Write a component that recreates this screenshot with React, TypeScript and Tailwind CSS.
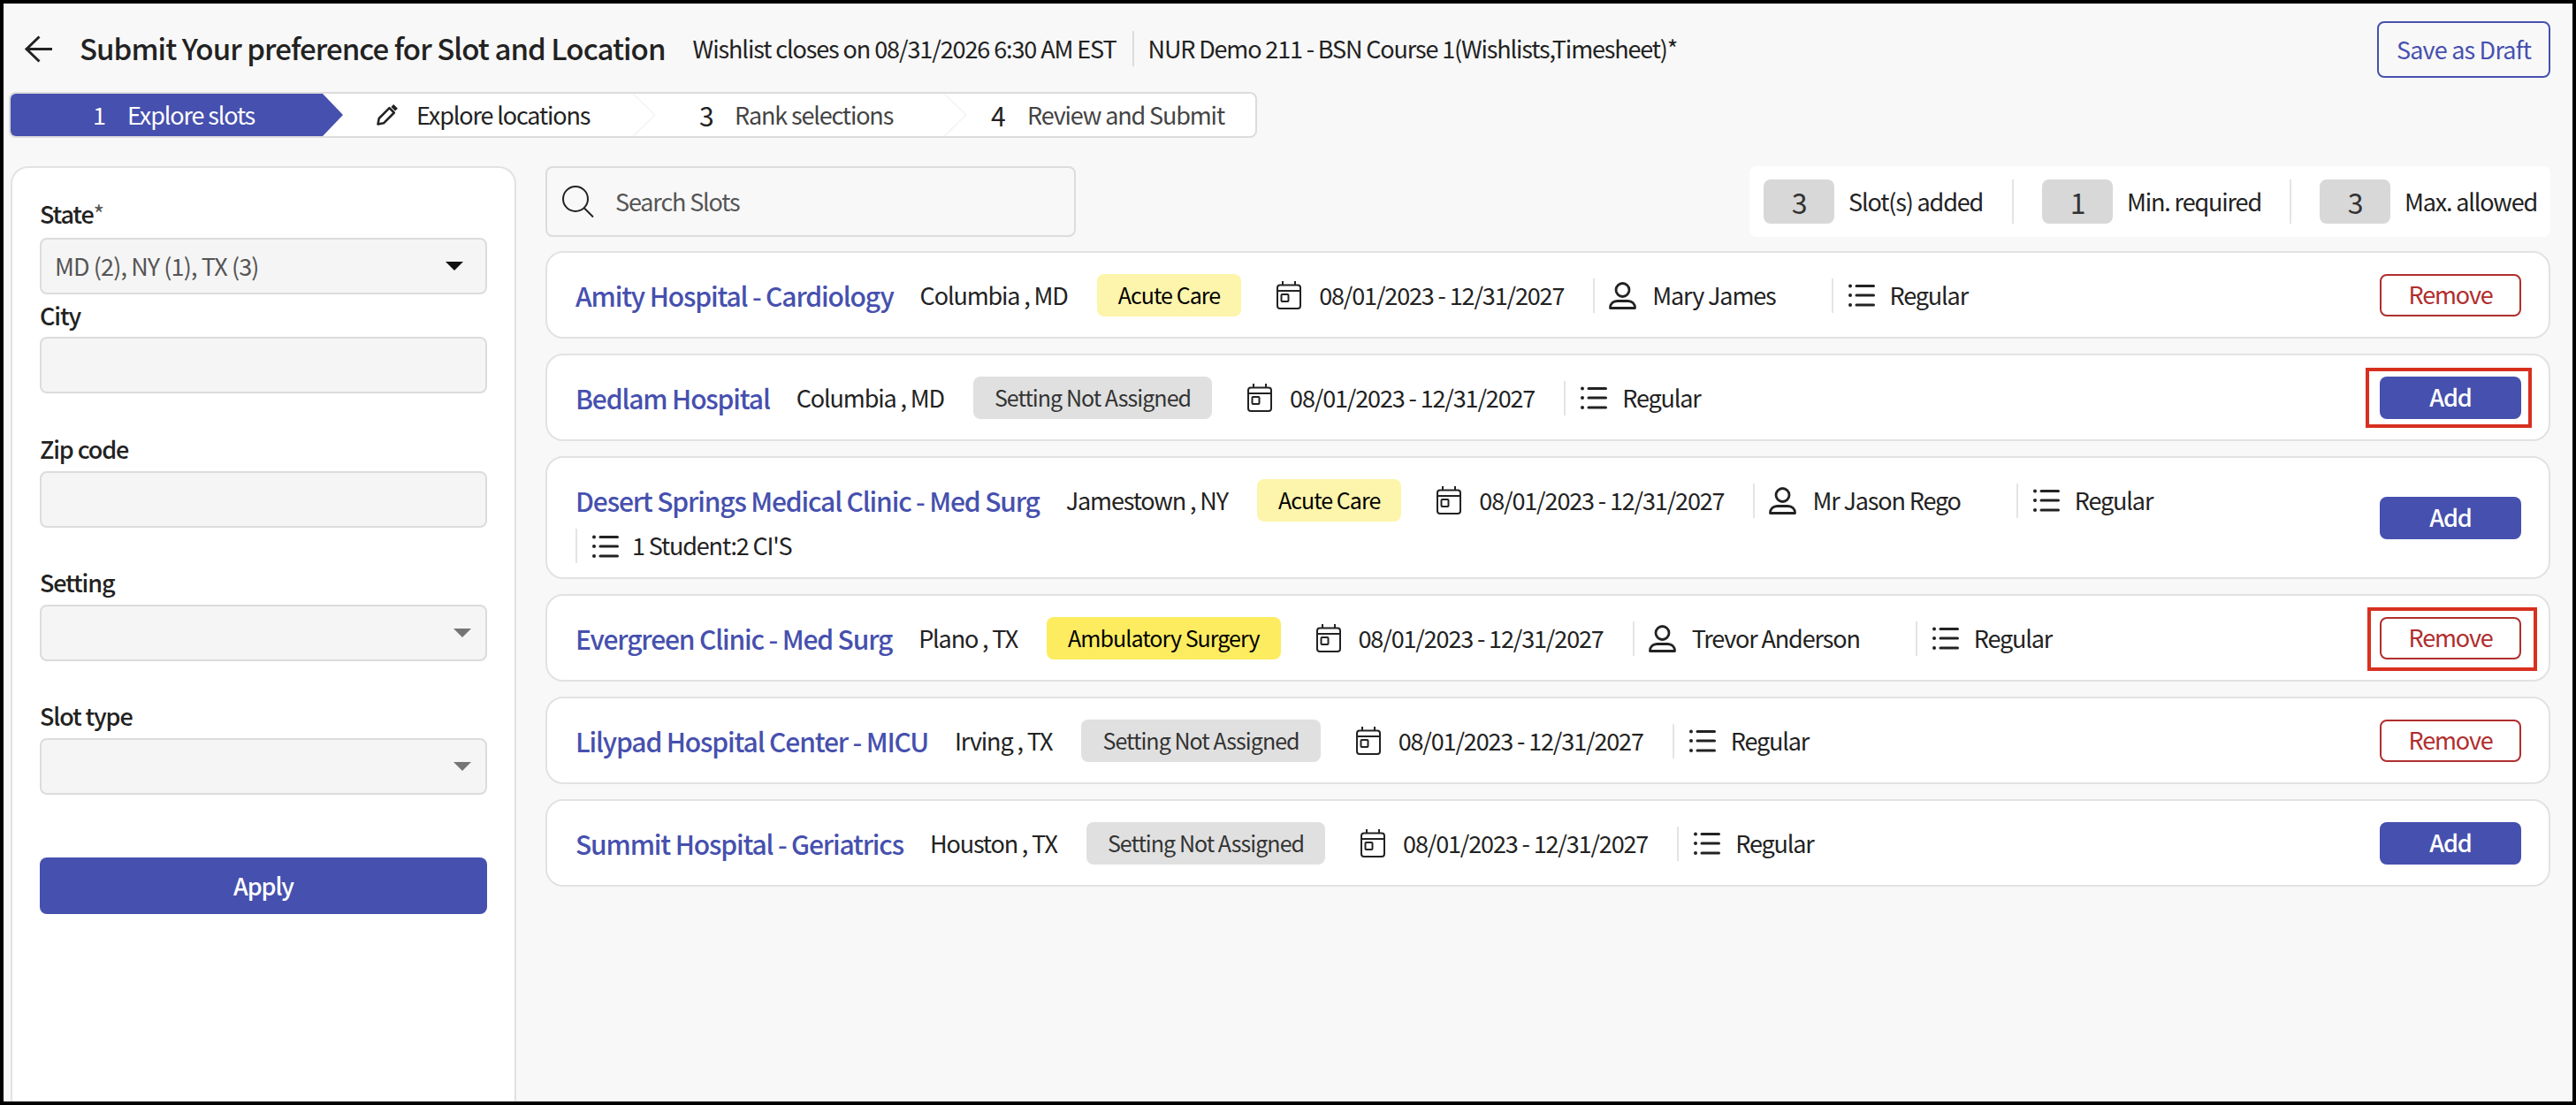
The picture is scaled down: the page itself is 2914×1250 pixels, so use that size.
import React from "react";

const IconCalendar = () => (
  <svg width="28" height="32" viewBox="0 0 28 32" fill="none" stroke="#222" strokeWidth="2" className="shrink-0">
    <rect x="1" y="4.500" width="26" height="26.500" rx="3" />
    <path d="M1 11h26M7 0v4.500M21 0v4.500" />
    <rect x="5.500" y="15" width="8" height="8" rx="1" />
  </svg>
);

const IconPerson = () => (
  <svg width="31" height="31" viewBox="0 0 31 31" fill="none" stroke="#222" strokeWidth="2.800" strokeLinejoin="round" className="shrink-0">
    <circle cx="15.500" cy="9" r="7.500" />
    <path d="M1.500 29.500c0-5 3.500-8 8-8h12c4.500 0 8 3 8 8z" />
  </svg>
);

const IconList = () => (
  <svg width="30" height="26" viewBox="0 0 30 26" fill="none" stroke="#222" strokeWidth="3" strokeLinecap="round" className="shrink-0">
    <path d="M9 2.500h19.500M9 13h19.500M9 24h19.500" />
    <circle cx="2" cy="2.500" r="2" fill="#222" stroke="none" />
    <circle cx="2" cy="13" r="2" fill="#222" stroke="none" />
    <circle cx="2" cy="24" r="2" fill="#222" stroke="none" />
  </svg>
);

const Chevron = () => (
  <svg width="26" height="48" viewBox="0 0 26 48" fill="none" stroke="#f3f3f3" strokeWidth="1.500" className="absolute -left-px top-0">
    <path d="M0 0l25 24L0 48" />
  </svg>
);

type Slot = {
  name: string;
  location: string;
  setting: string;
  tone: string;
  teacher?: string;
  extra?: string;
  action: "Add" | "Remove";
  mark?: string;
};

const slots: Slot[] = [
  { name: "Amity Hospital - Cardiology", location: "Columbia , MD", setting: "Acute Care", tone: "bg-[#fdf5ab] text-black", teacher: "Mary James", action: "Remove" },
  { name: "Bedlam Hospital", location: "Columbia , MD", setting: "Setting Not Assigned", tone: "bg-[#e0e0e0] text-[#333]", action: "Add", mark: "add" },
  { name: "Desert Springs Medical Clinic - Med Surg", location: "Jamestown , NY", setting: "Acute Care", tone: "bg-[#fdf5ab] text-black", teacher: "Mr Jason Rego", extra: "1 Student:2 CI'S", action: "Add" },
  { name: "Evergreen Clinic - Med Surg", location: "Plano , TX", setting: "Ambulatory Surgery", tone: "bg-[#fdec60] text-black", teacher: "Trevor Anderson", action: "Remove", mark: "remove" },
  { name: "Lilypad Hospital Center - MICU", location: "Irving , TX", setting: "Setting Not Assigned", tone: "bg-[#e0e0e0] text-[#333]", action: "Remove" },
  { name: "Summit Hospital - Geriatrics", location: "Houston , TX", setting: "Setting Not Assigned", tone: "bg-[#e0e0e0] text-[#333]", action: "Add" },
];

const Field = ({ label, star, top, gap, value, arrow }: { label: string; star?: boolean; top: string; gap: string; value?: string; arrow?: "dark" | "gray" }) => (
  <div className={top}>
    <div className="h-7 flex items-center font-medium text-[#222]">
      {label}
      {star && <span className="text-[#555] font-normal">*</span>}
    </div>
    <div className={`${gap} h-16 rounded-lg border-2 border-[#dcdcdc] bg-[#f5f5f5] pl-[15px] pr-4 flex items-center justify-between tracking-[-0.9px] text-[#555]`}>
      <span>{value}</span>
      {arrow === "dark" && <span className="w-0 h-0 mr-[9px] border-x-[10px] border-x-transparent border-t-[10px] border-t-[#111]" />}
      {arrow === "gray" && <span className="w-0 h-0 border-x-[10px] border-x-transparent border-t-[10px] border-t-[#757575]" />}
    </div>
  </div>
);

const SlotCard = ({ slot }: { slot: Slot }) => (
  <div className="rounded-[20px] border-2 border-[#e2e2e2] bg-white pl-8 pr-[31px] flex items-center justify-between">
    <div className={`w-[1980px] pt-6 flex flex-wrap items-center gap-y-2 text-[#222] ${slot.extra ? "pb-4" : "pb-[23px]"}`}>
      <span className="text-[30px] leading-[48px] font-medium text-[#4650ae] mr-[30px]">{slot.name}</span>
      <span className="mr-[33px]">{slot.location}</span>
      <span className={`h-12 px-6 rounded-lg flex items-center mr-10 text-[25px] tracking-[-0.95px] ${slot.tone}`}>{slot.setting}</span>
      <IconCalendar />
      <span className="ml-5 mr-[33px]">08/01/2023 - 12/31/2027</span>
      {slot.teacher && (
        <span className="h-[39px] border-l-2 border-[#e4e4e4] pl-4 pr-[63px] flex items-center gap-[18px]">
          <IconPerson />
          {slot.teacher}
        </span>
      )}
      <span className="h-[39px] border-l-2 border-[#e4e4e4] pl-[17px] flex items-center gap-[17px]">
        <IconList />
        Regular
      </span>
      {slot.extra && (
        <span className="h-[39px] border-l-2 border-[#e4e4e4] pl-[17px] flex items-center gap-[15px]">
          <IconList />
          {slot.extra}
        </span>
      )}
    </div>
    <div className="relative shrink-0">
      {slot.action === "Add" ? (
        <button className="block w-40 h-12 rounded-lg bg-[#4650ae] text-white font-medium">Add</button>
      ) : (
        <button className="block w-40 h-12 rounded-lg border-2 border-[#b02e2e] bg-white text-[#b02e2e]">Remove</button>
      )}
      {slot.mark === "add" && <div className="absolute -left-4 -right-3 -top-[10px] -bottom-[10px] border-[4px] border-[#d8301f]" />}
      {slot.mark === "remove" && <div className="absolute -left-[14px] -right-[18px] -top-[11px] -bottom-[13px] border-[4px] border-[#d8301f]" />}
    </div>
  </div>
);

const Stat = ({ value, label, width }: { value: string; label: string; width: string }) => (
  <div className={`flex items-center gap-4 ${width}`}>
    <span className="w-20 h-[50px] rounded-lg bg-[#d8d8d8] flex items-center justify-center text-[32px] text-[#333]">{value}</span>
    <span className="text-[#222]">{label}</span>
  </div>
);

export default function App() {
  return (
    <div className="font-['Noto_Sans_CJK_SC','Noto_Sans',sans-serif] text-[27px] tracking-[-1.15px] w-[2914px] h-[1250px] border-4 border-black bg-[#f8f8f8] overflow-hidden flex flex-col">
      {/* head */}
      <div className="h-[100px] shrink-0 flex pt-5 pr-[25px]">
        <div className="flex-1 flex items-center h-[62px] pl-[23px]">
          <svg width="32" height="31" viewBox="0 0 32 31" fill="none" stroke="#222" strokeWidth="3" className="shrink-0">
            <path d="M32 15.500H3M17.500 1.500L3 15.500l14.500 14" />
          </svg>
          <h1 className="ml-[31px] text-[33px] tracking-[-0.95px] font-medium text-[#222]">Submit Your preference for Slot and Location</h1>
          <span className="ml-[31px] tracking-[-1.1px] text-[#222]">Wishlist closes on 08/31/2026 6:30 AM EST</span>
          <span className="ml-[18px] h-10 border-l-2 border-[#dcdcdc]" />
          <span className="ml-4 text-[#222]">NUR Demo 211 - BSN Course 1(Wishlists,Timesheet)*</span>
        </div>
        <button className="w-[196px] h-16 rounded-lg border-2 border-[#4650ae] tracking-[-0.8px] text-[#4650ae]">Save as Draft</button>
      </div>

      {/* steps */}
      <div className="ml-[6px] w-[1412px] h-[52px] shrink-0 rounded-lg border-2 border-[#dcdcdc] bg-white flex text-[#444] relative">
        <div className="relative w-[353px] h-12 bg-[#4650ae] rounded-l-md flex items-center pl-[93px] text-white">
          <span className="w-[39px]">1</span>
          <span>Explore slots</span>
          <svg width="24" height="48" viewBox="0 0 24 48" className="absolute left-full top-0">
            <path d="M0 0l23 24L0 48z" fill="#4650ae" />
          </svg>
        </div>
        <div className="w-[352px] h-12 flex items-center pl-[61px]">
          <svg width="24" height="24" viewBox="0 0 24 24" fill="none" stroke="#222" strokeWidth="2.500" strokeLinejoin="round" className="mr-[21px]">
            <path d="M1.500 22.500l1.200-6.500L14.500 4.200l5.300 5.300L8 21.300z" />
            <path d="M17.800 1.500l4.700 4.700" strokeWidth="4" />
          </svg>
          <span className="text-[#222]">Explore locations</span>
        </div>
        <div className="relative w-[352px] h-12 flex items-center pl-[74px]">
          <Chevron />
          <span className="w-10 text-[30px] text-[#222]">3</span>
          <span>Rank selections</span>
        </div>
        <div className="relative flex-1 h-12 flex items-center pl-[52px]">
          <Chevron />
          <span className="w-[41px] text-[30px] text-[#222]">4</span>
          <span>Review and Submit</span>
        </div>
      </div>

      {/* body */}
      <div className="flex-1 min-h-0 flex mt-8 pl-2 pr-[25px]">
        <div className="w-[572px] shrink-0 rounded-t-[20px] border-2 border-b-0 border-[#e2e2e2] bg-white px-[31px] pt-[38px]">
          <Field label="State" star top="" gap="mt-[13px]" value="MD (2), NY (1), TX (3)" arrow="dark" />
          <Field label="City" top="mt-[10px]" gap="mt-[10px]" />
          <Field label="Zip code" top="mt-[49px]" gap="mt-[11px]" />
          <Field label="Setting" top="mt-[48px]" gap="mt-[11px]" arrow="gray" />
          <Field label="Slot type" top="mt-[48px]" gap="mt-[11px]" arrow="gray" />
          <button className="mt-[71px] w-full h-16 rounded-lg bg-[#4650ae] text-white font-medium">Apply</button>
        </div>

        <div className="flex-1 ml-[33px] min-w-0">
          <div className="flex justify-between">
            <div className="w-[600px] h-20 rounded-lg border-2 border-[#dcdcdc] bg-[#f8f8f8] flex items-center pl-[17px] text-[#555]">
              <svg width="36" height="36" viewBox="0 0 36 36" fill="none" stroke="#222" strokeWidth="2" className="mr-6">
                <circle cx="15" cy="15" r="14" />
                <path d="M25 25.500L35 35.500" />
              </svg>
              Search Slots
            </div>
            <div className="w-[906px] h-20 rounded-lg bg-white flex items-center pl-4">
              <Stat value="3" label="Slot(s) added" width="w-[283px] border-r-2 border-[#e4e4e4]" />
              <div className="ml-8">
                <Stat value="1" label="Min. required" width="w-[282px] border-r-2 border-[#e4e4e4]" />
              </div>
              <div className="ml-8">
                <Stat value="3" label="Max. allowed" width="" />
              </div>
            </div>
          </div>
          <div className="mt-4 flex flex-col gap-[17px]">
            {slots.map((slot) => (
              <SlotCard key={slot.name} slot={slot} />
            ))}
          </div>
        </div>
      </div>
    </div>
  );
}
